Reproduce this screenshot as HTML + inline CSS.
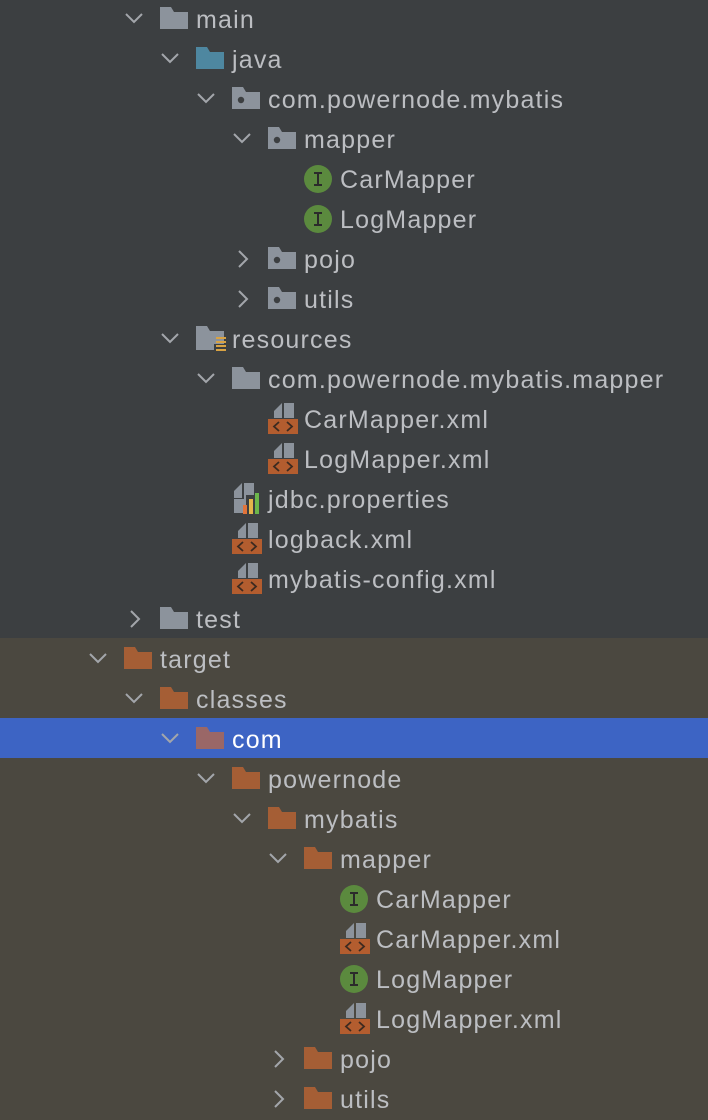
<!DOCTYPE html>
<html><head><meta charset="utf-8"><style>
body{margin:0;width:708px;height:1120px;overflow:hidden;background:#3c3f41;font-family:"Liberation Sans",Arial,sans-serif;position:relative}
.bot{position:absolute;left:0;top:638px;width:708px;height:482px;background:#4b4840}
.sel{position:absolute;left:0;top:718px;width:708px;height:40px;background:#3d64c4}
.r{position:absolute;height:40px;line-height:40px;font-size:25px;letter-spacing:1.2px;color:#bcbec2;white-space:nowrap}
.r svg{position:absolute}
.t{position:absolute;top:1px}
</style></head><body>
<div class="bot"></div><div class="sel"></div>
<div id="c"></div>
<script>
const rows=[
[0,'main','F','d'],[1,'java','J','d'],[2,'com.powernode.mybatis','P','d'],[3,'mapper','P','d'],
[4,'CarMapper','I',''],[4,'LogMapper','I',''],[3,'pojo','P','r'],[3,'utils','P','r'],
[1,'resources','R','d'],[2,'com.powernode.mybatis.mapper','F','d'],[3,'CarMapper.xml','X',''],[3,'LogMapper.xml','X',''],
[2,'jdbc.properties','B',''],[2,'logback.xml','X',''],[2,'mybatis-config.xml','X',''],[0,'test','F','r'],
[-1,'target','O','d'],[0,'classes','O','d'],[1,'com','C','d'],[2,'powernode','O','d'],[3,'mybatis','O','d'],[4,'mapper','O','d'],
[5,'CarMapper','I',''],[5,'CarMapper.xml','X',''],[5,'LogMapper','I',''],[5,'LogMapper.xml','X',''],[4,'pojo','O','r'],[4,'utils','O','r']];
const folder=(c,dot)=>`<svg width="28" height="22" style="left:0;top:8px"><path d="M0 0H11L14 5H28V22H0Z" fill="${c}"/>${dot?'<circle cx="9" cy="13" r="3.2" fill="#3c3f41"/>':''}</svg>`;
const ic={
F:folder('#8c939c'),J:folder('#4e87a0'),P:folder('#8c939c',1),O:folder('#a55e35'),C:folder('#9a6767'),
R:`<svg width="30" height="26" style="left:0;top:7px"><path d="M0 0H11L14 5H28V18H18V24H0Z" fill="#8c939c"/><g fill="#d9a343"><rect x="20" y="11" width="10" height="2"/><rect x="20" y="15" width="10" height="2"/><rect x="20" y="19" width="10" height="2"/><rect x="20" y="23" width="10" height="2"/></g></svg>`,
I:`<svg width="28" height="28" style="left:0;top:6px"><circle cx="14" cy="14" r="14" fill="#5b8a3e"/><path d="M10 8H18M10 20H18M14 8V20" stroke="#2b2b2b" stroke-width="2"/></svg>`,
X:`<svg width="30" height="31" style="left:0;top:4px"><path d="M6 15V8L14 0V15Z" fill="#8c939c"/><path d="M16 0H26V15H16Z" fill="#8c939c"/><rect x="0" y="16" width="30" height="15" fill="#b35d2f"/><path d="M11 19L6 23.5L11 28M19 19L24 23.5L19 28" stroke="#3c2a20" stroke-width="1.8" fill="none"/></svg>`,
B:`<svg width="30" height="31" style="left:0;top:4px"><path d="M2 15V8L10 0V15Z" fill="#8c939c"/><path d="M12 0H22V12H14V30H2V16H12Z" fill="#8c939c"/><rect x="11" y="22" width="4" height="9" fill="#e0733a"/><rect x="17" y="16" width="4" height="15" fill="#e5b54a"/><rect x="23" y="10" width="4" height="21" fill="#6cb64a"/></svg>`};
let h='';
rows.forEach((r,i)=>{const L=r[0];const top=40*i-1;const x=125+36*L;
let ch=r[3]=='d'?`<svg width="18" height="12" style="left:0;top:13px"><path d="M1 2L9 10L17 2" stroke="#a3a6ab" stroke-width="2" fill="none"/></svg>`:r[3]=='r'?`<svg width="12" height="18" style="left:4px;top:11px"><path d="M2 1L10 9L2 17" stroke="#a3a6ab" stroke-width="2" fill="none"/></svg>`:'';
h+=`<div class="r" style="left:${x}px;top:${top}px;width:650px">${ch}<div style="position:absolute;left:35px;top:0">${ic[r[2]]}</div><span class="t" style="left:71px;${i==18?'color:#fff':''}">${r[1]}</span></div>`;});
document.getElementById('c').innerHTML=h;
</script>
</body></html>
